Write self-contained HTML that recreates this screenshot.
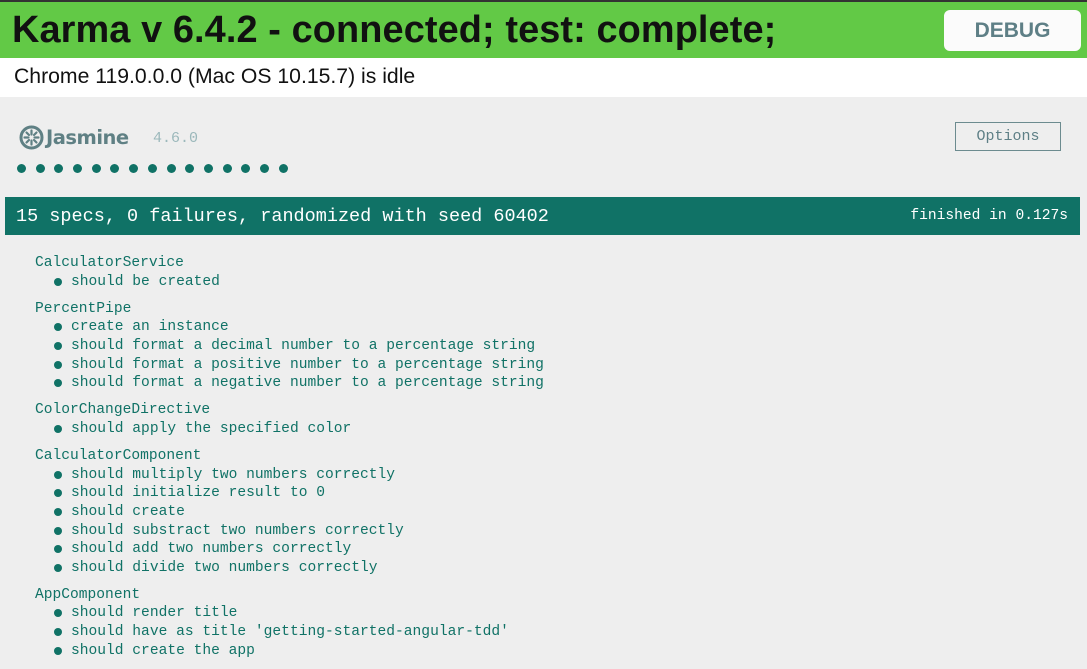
<!DOCTYPE html>
<html><head><style>
body{margin:0;width:1087px;height:663px;overflow:hidden;background:#eee;position:relative;font-family:"Liberation Sans",sans-serif}
.top{position:absolute;left:0;top:0;width:1087px;height:58px;background:#62c946;border-top:2px solid #333;box-sizing:border-box}
.top h1{margin:0;position:absolute;left:12px;top:7px;font-size:37.9px;font-weight:bold;color:#111;white-space:nowrap;letter-spacing:0.1px}
.debug{position:absolute;left:944px;top:8px;width:137px;height:41px;background:#fbfbfb;border-radius:6px;color:#5e7f86;font-weight:bold;font-size:21px;text-align:center;line-height:41px}
.bar{position:absolute;left:0;top:58px;width:1087px;height:39px;background:#fff}
.bar span{position:absolute;left:14px;top:7px;font-size:21.2px;color:#111}
.mono{font-family:"Liberation Mono",monospace}
.ver{position:absolute;left:153px;top:130px;font-size:15px;color:#9bb8bb}
.jas{position:absolute;left:46px;top:126px;font-size:19.5px;color:#5f8084;font-weight:bold;font-family:"DejaVu Sans",sans-serif;letter-spacing:-0.5px}
.opt{position:absolute;left:955px;top:122px;width:106px;height:29px;border:1px solid #6c8b8f;box-sizing:border-box;font-size:15px;color:#5e7f86;text-align:center;line-height:28px}
.dots{position:absolute;left:17px;top:160px;white-space:nowrap}
.dots i{display:inline-block;width:9px;height:9px;border-radius:50%;background:#107266;margin-right:9.7px}
.banner{position:absolute;left:5px;top:197px;width:1075px;height:38px;background:#107266;color:#fff}
.banner .l{position:absolute;left:11px;top:9px;font-size:18.5px}
.banner .r{position:absolute;right:12px;top:11px;font-size:14.6px}
.list{position:absolute;left:35px;top:254px;font-size:14.6px;color:#107266;line-height:18.6px}
.s{margin-bottom:8.6px}
.sp{padding-left:36px;position:relative;white-space:pre}
.sp:before{content:"";position:absolute;left:19px;top:5px;width:8px;height:8px;border-radius:50%;background:#107266}
</style></head><body>
<div class="top"><h1>Karma v 6.4.2 - connected; test: complete;</h1><div class="debug">DEBUG</div></div>
<div class="bar"><span>Chrome 119.0.0.0 (Mac OS 10.15.7) is idle</span></div>
<svg style="position:absolute;left:19px;top:125px" width="25" height="25" viewBox="0 0 25 25"><circle cx="12.5" cy="12.5" r="10.5" fill="none" stroke="#5f8084" stroke-width="3"/><g stroke="#5f8084" stroke-width="2.2" stroke-linecap="round"><line x1="12.5" y1="5.5" x2="12.5" y2="9.5"/><line x1="12.5" y1="15.5" x2="12.5" y2="19.5"/><line x1="5.5" y1="12.5" x2="9.5" y2="12.5"/><line x1="15.5" y1="12.5" x2="19.5" y2="12.5"/><line x1="7.5" y1="7.5" x2="10" y2="10"/><line x1="15" y1="15" x2="17.5" y2="17.5"/><line x1="17.5" y1="7.5" x2="15" y2="10"/><line x1="10" y1="15" x2="7.5" y2="17.5"/></g></svg>
<div class="jas">Jasmine</div>
<div class="ver mono">4.6.0</div>
<div class="opt mono">Options</div>
<div class="dots"><i></i><i></i><i></i><i></i><i></i><i></i><i></i><i></i><i></i><i></i><i></i><i></i><i></i><i></i><i></i></div>
<div class="banner mono"><span class="l">15 specs, 0 failures, randomized with seed 60402</span><span class="r">finished in 0.127s</span></div>
<div class="list mono">
<div class="s"><div>CalculatorService</div><div class="sp">should be created</div></div>
<div class="s"><div>PercentPipe</div><div class="sp">create an instance</div><div class="sp">should format a decimal number to a percentage string</div><div class="sp">should format a positive number to a percentage string</div><div class="sp">should format a negative number to a percentage string</div></div>
<div class="s"><div>ColorChangeDirective</div><div class="sp">should apply the specified color</div></div>
<div class="s"><div>CalculatorComponent</div><div class="sp">should multiply two numbers correctly</div><div class="sp">should initialize result to 0</div><div class="sp">should create</div><div class="sp">should substract two numbers correctly</div><div class="sp">should add two numbers correctly</div><div class="sp">should divide two numbers correctly</div></div>
<div class="s"><div>AppComponent</div><div class="sp">should render title</div><div class="sp">should have as title 'getting-started-angular-tdd'</div><div class="sp">should create the app</div></div>
</div>
</body></html>
